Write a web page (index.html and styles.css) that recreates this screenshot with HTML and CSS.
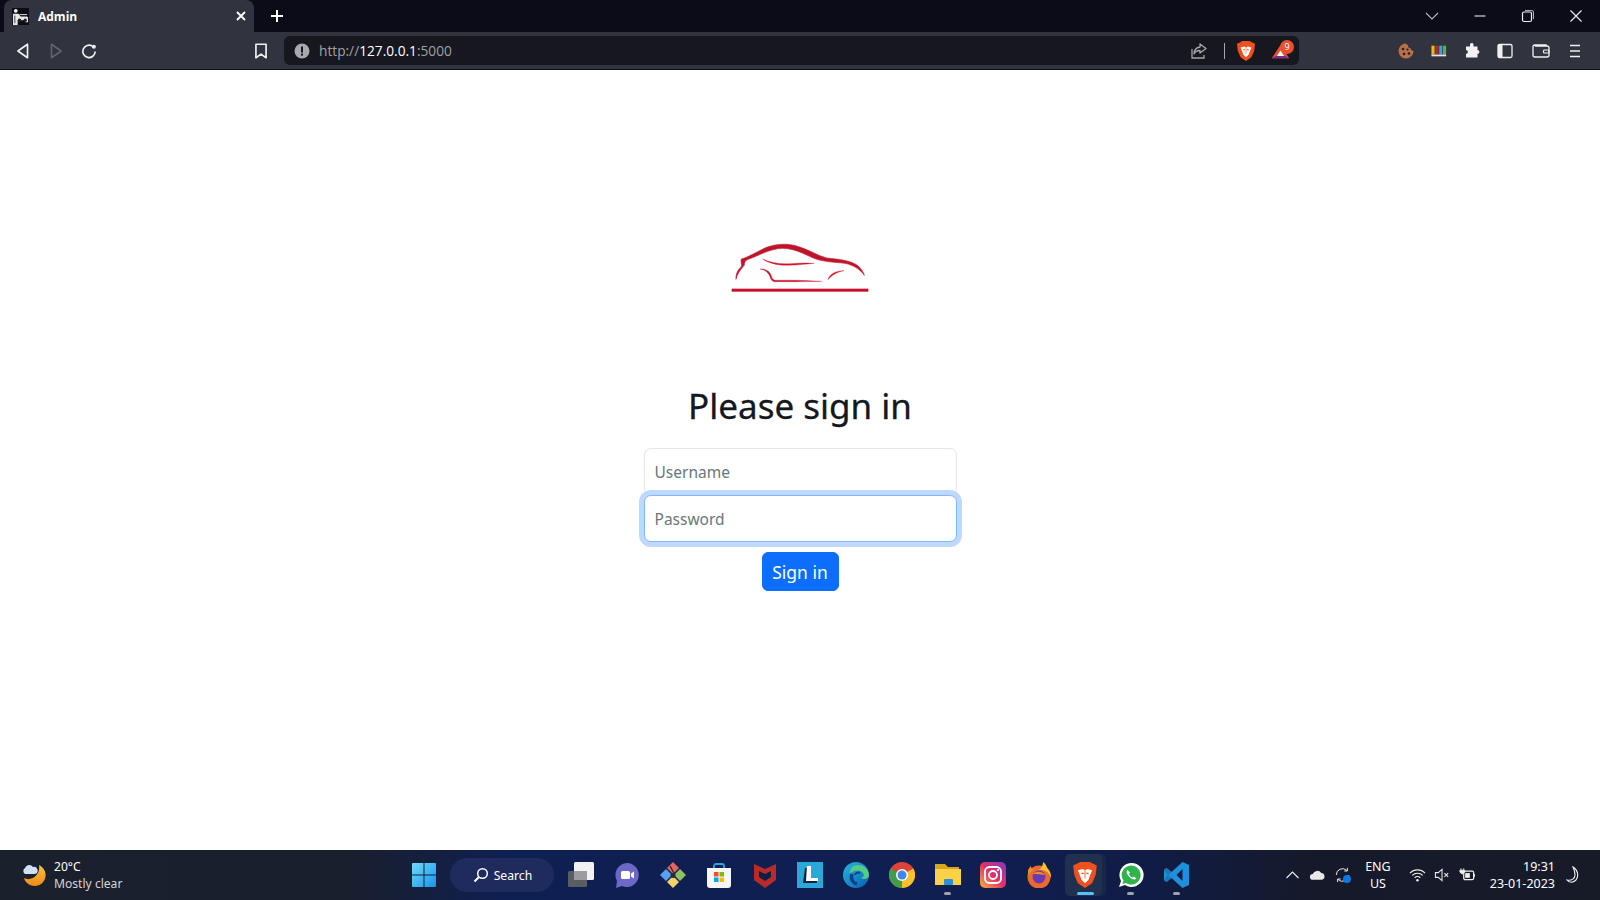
FILE: index.html
```html
<!DOCTYPE html>
<html lang="en">
<head>
<meta charset="utf-8">
<title>Admin</title>
<link rel="stylesheet" href="styles.css">
</head>
<body>
<header class="browser">
  <div class="tabstrip">
    <div class="tab">
      <svg class="favicon" viewBox="0 0 18 18"><rect width="18" height="18" fill="#0b0c12"/><circle cx="4" cy="3" r="2" fill="#eee"/><path d="M1 6h6l2 3h7l1 1v5h-3v-2H6v5H1z" fill="#e8e8e8"/><path d="M3 8v8" stroke="#0b0c12" stroke-width=".8"/><circle cx="8" cy="13" r="1.800" fill="#222"/><circle cx="14" cy="13" r="1.800" fill="#222"/><path d="M8 7h8" stroke="#e8e8e8" stroke-width="1"/></svg>
      <span class="tab-title">Admin</span>
      <svg class="tab-close" viewBox="0 0 12 12"><path d="M2 2l8 8M10 2l-8 8" stroke="#fff" stroke-width="1.800"/></svg>
    </div>
    <svg class="newtab" viewBox="0 0 14 14"><path d="M7 1v12M1 7h12" stroke="#fff" stroke-width="2"/></svg>
    <div class="win-controls">
      <svg class="win-btn" viewBox="0 0 14 14"><path d="M1 4l6 6 6-6" fill="none" stroke="#b4b6bc" stroke-width="1.100"/></svg>
      <svg class="win-btn" viewBox="0 0 14 14"><path d="M1.500 7h11" stroke="#e8e8e8" stroke-width="1.100"/></svg>
      <svg class="win-btn" viewBox="0 0 14 14"><rect x="1.500" y="3" width="9" height="9.500" rx="1.500" fill="none" stroke="#eee" stroke-width="1.200"/><path d="M4 1.500h6.500a2 2 0 0 1 2 2V10" fill="none" stroke="#aaa" stroke-width="1.100"/></svg>
      <svg class="win-btn" viewBox="0 0 14 14"><path d="M1.500 1.500l11 11M12.500 1.500l-11 11" stroke="#eee" stroke-width="1.100"/></svg>
    </div>
  </div>
  <div class="toolbar">
    <svg class="tool first" viewBox="0 0 16 16"><path d="M12 2v12L3.500 8z" fill="none" stroke="#f0f0f0" stroke-width="1.500" stroke-linejoin="round"/></svg>
    <svg class="tool" viewBox="0 0 16 16"><path d="M4 2v12L12.500 8z" fill="none" stroke="#62646d" stroke-width="1.400" stroke-linejoin="round"/></svg>
    <svg class="tool" viewBox="0 0 16 16"><path d="M13.500 8.500A5.500 5.500 0 1 1 11 3.700" fill="none" stroke="#f0f0f0" stroke-width="1.500"/><circle cx="12.300" cy="4.300" r="1.800" fill="#f0f0f0"/></svg>
    <svg class="tool bookmark" viewBox="0 0 16 16"><path d="M3.500 2h9v12L8 10.800 3.500 14z" fill="none" stroke="#f0f0f0" stroke-width="1.500" stroke-linejoin="round"/></svg>
    <div class="urlbar">
      <svg class="alert" viewBox="0 0 16 16"><circle cx="8" cy="8" r="7.500" fill="#a8a9ae"/><rect x="7" y="3.500" width="2" height="6" fill="#16171f"/><rect x="7" y="10.600" width="2" height="2" fill="#16171f"/></svg>
      <span class="url"><span class="dim">http://</span><span class="host">127.0.0.1</span><span class="dim">:5000</span></span>
      <svg class="share" viewBox="0 0 18 18"><path d="M2 7v9h12v-3" fill="none" stroke="#a5a6ab" stroke-width="1.300"/><path d="M10 2l6 4.500-6 4.500V8.500c-3 0-5 1-6 3.500 0-4 2.500-6.500 6-7z" fill="none" stroke="#a5a6ab" stroke-width="1.300" stroke-linejoin="round"/></svg>
      <span class="sep"></span>
      <svg class="brave-small" viewBox="2 1 20 22"><path d="M5 2.500L8 1h8l3 1.500 3 1.500-1 8-3 7-6 4-6-4-3-7-1-8z" fill="#f0501e"/><path d="M6 8l4-1 2 1 2-1 4 1-2 5-1 3-3 3-3-3-1-3z" fill="#fff"/><path d="M9 10h2v1.200H9zM13 10h2v1.200h-2z" fill="#f0501e"/><path d="M12 8v7" stroke="#f0501e" stroke-width=".7"/></svg>
      <span class="bat">
        <svg class="bat-icon" viewBox="0 0 24 20"><path d="M12 1l11 17H1z" fill="#e8502f"/><path d="M1 18l5-3h12l5 3z" fill="#7c2a92"/><path d="M12 8l4.500 7h-9z" fill="#fff"/></svg>
        <span class="badge">9</span>
      </span>
    </div>
    <div class="extensions">
      <svg class="ext" viewBox="0 0 16 16"><path d="M8 .500a7.500 7.500 0 1 0 7.500 7.500c-1.500 0-2.500-1-2.700-2.500C11 5.500 9.800 4 10 2 9 1.800 8.500 1.500 8 .500z" fill="#b8704a"/><circle cx="5" cy="6" r="1.300" fill="#2c1a14"/><circle cx="9.500" cy="6.500" r="1.100" fill="#2c1a14"/><circle cx="11" cy="10.500" r="1.300" fill="#2c1a14"/><circle cx="6" cy="11" r="1.300" fill="#2c1a14"/></svg>
      <svg class="ext" viewBox="0 0 18 16"><rect x="0.500" y="2" width="3.500" height="10" fill="#e8b71e"/><rect x="4.800" y="2" width="3.500" height="10" fill="#b32a1f"/><rect x="9.200" y="2" width="3.500" height="10" fill="#3f9ce0"/><rect x="13.500" y="2" width="3.500" height="10" fill="#58b347"/><path d="M0.500 12h16.500v2H0.500z" fill="#e4e4e4"/></svg>
      <svg class="ext" viewBox="0 0 16 16"><path d="M6 1.500a1.800 1.800 0 0 1 3.500 0V3.500h4v3.500a1.900 1.900 0 0 1 0 3.800v3.700H2v-3.700a1.900 1.900 0 0 0 0-3.800V3.500h4z" fill="#f2f2f2"/></svg>
      <svg class="ext" viewBox="0 0 16 16"><rect x="1" y="1.500" width="14" height="13" rx="1.500" fill="none" stroke="#f0f0f0" stroke-width="1.300"/><rect x="1" y="1.500" width="4.500" height="13" fill="#f0f0f0"/></svg>
      <svg class="ext wallet" viewBox="0 0 18 16"><path d="M14 3V2H3a2 2 0 0 0-2 2v8a2 2 0 0 0 2 2h12a2 2 0 0 0 2-2V5a2 2 0 0 0-2-2H3" fill="none" stroke="#f0f0f0" stroke-width="1.300"/><rect x="11.500" y="7" width="5.500" height="3" rx="1" fill="none" stroke="#f0f0f0" stroke-width="1.200"/></svg>
      <svg class="ext" viewBox="0 0 16 16"><path d="M3 2.500h10M3 8h10M3 13.500h10" stroke="#f0f0f0" stroke-width="1.300"/></svg>
    </div>
  </div>
</header>

<main class="page">
  <svg class="logo" viewBox="0 0 540 210" role="img" aria-label="Car logo">
    <path d="M78 148C77 130 84 120 95 108C94 100 92 94 94 87C115 82 140 65 170 52C200 41 232 40 260 48C295 58 320 76 350 84C390 88 425 92 445 108C455 118 461 128 463 136C450 118 432 106 405 100C370 96 335 96 305 82C275 68 250 56 218 55C180 56 150 75 115 88C105 92 104 96 103 105C93 118 82 130 78 148Z" fill="#bd1429" stroke="#c4203a" stroke-width="2"/>
    <path d="M158 87C180 98 210 103 240 101C265 99 290 98 312 100C285 103 262 105 238 106C205 107 175 100 158 87Z" fill="#d5142b" stroke="#d5142b"/>
    <path d="M150 117C170 116 180 125 185 140C187 147 190 150 197 151C240 150 295 151 335 154C290 155 235 156 192 155C184 153 182 146 178 136C172 124 163 119 150 117Z" fill="#c6152c" stroke="#c6152c"/>
    <path d="M354 149C357 134 375 122 402 122C382 126 366 134 354 149Z" fill="#d5142b" stroke="#d5142b"/>
    <rect x="65" y="176" width="410" height="9" fill="#c8102e"/>
  </svg>
  <h1 class="title">Please sign in</h1>
  <form class="signin">
    <input class="field field-top" type="text" placeholder="Username">
    <input class="field field-focus" type="password" placeholder="Password">
    <button class="submit" type="button">Sign in</button>
  </form>
</main>

<footer class="taskbar">
  <div class="weather">
    <svg class="weather-icon" viewBox="0 0 26 26"><defs><linearGradient id="moon" x1="0" y1="0" x2="0" y2="1"><stop offset="0" stop-color="#f9c33c"/><stop offset="1" stop-color="#ee8a18"/></linearGradient></defs><path d="M18 3a11 11 0 1 1-15 13C10 20 20 13 18 3z" fill="url(#moon)"/><path d="M4 12a3.500 3.500 0 0 1 0-6 4.500 4.500 0 0 1 8-1 3.500 3.500 0 0 1 2 7z" fill="#cfe0f5"/></svg>
    <div class="weather-text"><span class="temp">20°C</span><span class="cond">Mostly clear</span></div>
  </div>

  <div class="apps">
    <div class="app start"><svg class="icon" viewBox="0 0 26 26"><defs><linearGradient id="win" x1="0" y1="0" x2="1" y2="1"><stop offset="0" stop-color="#6fdcf8"/><stop offset="1" stop-color="#1793ea"/></linearGradient></defs><path d="M1 2a1 1 0 0 1 1-1h10.500v11.500H1zM13.500 1H24a1 1 0 0 1 1 1v10.500H13.500zM1 13.500h11.500V25H2a1 1 0 0 1-1-1zM13.500 13.500H25V24a1 1 0 0 1-1 1H13.500z" fill="url(#win)"/></svg></div>
    <div class="search">
      <svg class="search-icon" viewBox="0 0 16 16"><circle cx="9.500" cy="6.500" r="4.800" fill="none" stroke="#fff" stroke-width="1.500"/><path d="M6 10l-4.500 4.500" stroke="#fff" stroke-width="2"/></svg>
      <span>Search</span>
    </div>
    <div class="app"><svg class="icon" viewBox="0 0 26 26"><rect x="0" y="9" width="19" height="16" rx="1.500" fill="#5b5d64"/><rect x="6" y="0" width="20" height="18" rx="1.500" fill="#f2f2f2"/><rect x="6" y="9" width="13" height="9" fill="#9b9ca1"/></svg></div>
    <div class="app"><svg class="icon" viewBox="0 0 26 26"><path d="M13 1a12 12 0 1 1-5 23L2 26l1-7A12 12 0 0 1 13 1z" fill="#6c68c8"/><rect x="7" y="9" width="9" height="8" rx="1.500" fill="#fff"/><path d="M17 11.500l3-2v7l-3-2z" fill="#fff"/></svg></div>
    <div class="app"><svg class="icon" viewBox="0 0 26 26"><path d="M13 0l6 6-6 6-6-6z" fill="#e2685f"/><path d="M20 7l6 6-6 6-6-6z" fill="#8ec163"/><path d="M13 14l6 6-6 6-6-6z" fill="#f1d368"/><path d="M6 7l6 6-6 6-6-6z" fill="#5a9ff0"/><path d="M10 4l5 9" stroke="#2a2c38" stroke-width="1.400"/><circle cx="13" cy="13.500" r="2.500" fill="#2a2c38"/></svg></div>
    <div class="app"><svg class="icon" viewBox="0 0 26 26"><path d="M8 7V4a2 2 0 0 1 2-2h6a2 2 0 0 1 2 2v3" fill="none" stroke="#2aa4e0" stroke-width="1.800"/><path d="M1 6h24v17a3 3 0 0 1-3 3H4a3 3 0 0 1-3-3z" fill="#f6f6f6"/><rect x="8" y="10" width="4.500" height="4.500" fill="#f25022"/><rect x="13.500" y="10" width="4.500" height="4.500" fill="#7fba00"/><rect x="8" y="15.500" width="4.500" height="4.500" fill="#00a4ef"/><rect x="13.500" y="15.500" width="4.500" height="4.500" fill="#ffb900"/></svg></div>
    <div class="app"><svg class="icon" viewBox="0 0 26 26"><path d="M2 2l11 5 11-5v16L13 26 2 18z" fill="#b92a2a"/><path d="M7 9v6l6 4 6-4V9l-6 3z" fill="#0f1d44"/></svg></div>
    <div class="app"><svg class="icon" viewBox="0 0 26 26"><rect width="26" height="26" fill="#2aa8d8"/><path d="M8 6h5v11h7v4H6z" fill="#13233d"/><path d="M10 4h4v12h7v3H9z" fill="#fff"/></svg></div>
    <div class="app"><svg class="icon" viewBox="0 0 26 26"><defs><linearGradient id="edge" x1="0" y1="0" x2="1" y2="1"><stop offset="0" stop-color="#2bb4d8"/><stop offset="0.600" stop-color="#1583c9"/><stop offset="1" stop-color="#0c5aa8"/></linearGradient></defs><circle cx="13" cy="13" r="13" fill="url(#edge)"/><path d="M26 14C26 6 20 3 15 3 9 3 6 8 7 13c1-5 10-6 13-2 1.500 2 1 4-2 5 3 2 7 1 8-2z" fill="#55cc85"/><path d="M9 12c-2 5 1 9 5 10" fill="none" stroke="#0d3f86" stroke-width="3.500"/><path d="M12 13c0-2 3-3 5-2" fill="none" stroke="#0d3f86" stroke-width="2"/></svg></div>
    <div class="app"><svg class="icon" viewBox="0 0 26 26"><circle cx="13" cy="13" r="13" fill="#db4437"/><path d="M13 13L24.300 6.500A13 13 0 0 1 13 26z" fill="#fbc02d"/><path d="M13 13L13 26A13 13 0 0 1 1.700 6.500z" fill="#3f9d4b"/><circle cx="13" cy="13" r="6" fill="#fff"/><circle cx="13" cy="13" r="4.500" fill="#3f86f0"/></svg></div>
    <div class="app pinned"><svg class="icon" viewBox="0 0 26 26"><path d="M0 2h10l3 3h11v18H0z" fill="#d9a51f"/><path d="M0 7h26v16H0z" fill="#fbd145"/><rect x="9" y="17" width="9" height="6" rx="1" fill="#2d8fd8"/></svg><span class="dot"></span></div>
    <div class="app"><svg class="icon" viewBox="0 0 26 26"><defs><linearGradient id="ig" x1="0" y1="1" x2="1" y2="0"><stop offset="0" stop-color="#fbb03b"/><stop offset="0.500" stop-color="#e1306c"/><stop offset="1" stop-color="#7a3bc1"/></linearGradient></defs><rect width="26" height="26" rx="5" fill="url(#ig)"/><rect x="5" y="5" width="16" height="16" rx="4.500" fill="none" stroke="#fff" stroke-width="1.800"/><circle cx="13" cy="13" r="4" fill="none" stroke="#fff" stroke-width="1.800"/><circle cx="18" cy="8" r="1.100" fill="#fff"/></svg></div>
    <div class="app"><svg class="icon" viewBox="0 0 26 26"><circle cx="13" cy="15" r="11.500" fill="#f0682a"/><path d="M17 0c4 3 3 5 6 8 2 3 2 6 2 8-3-8-9-9-13-8 3-1 5-4 5-8z" fill="#fbc02d"/><path d="M2 8c1-2 2-3 3-4 0 2 1 3 3 4-3 1-5 3-6 7z" fill="#f58a2a"/><circle cx="13" cy="15" r="6.500" fill="#6a3bb0"/><path d="M7 12c3-3 9-3 12 1-4-1-8-1-12-1z" fill="#f58a2a"/></svg></div>
    <div class="app active">
      <svg class="icon" viewBox="2 1 20 22"><path d="M5 2.500L8 1h8l3 1.500 3 1.500-1 8-3 7-6 4-6-4-3-7-1-8z" fill="#f0501e"/><path d="M6 8l4-1 2 1 2-1 4 1-2 5-1 3-3 3-3-3-1-3z" fill="#fff"/><path d="M9 10h2v1.200H9zM13 10h2v1.200h-2z" fill="#f0501e"/><path d="M12 8v7" stroke="#f0501e" stroke-width=".7"/></svg>
      <span class="running"></span>
    </div>
    <div class="app pinned">
      <svg class="icon" viewBox="0 0 26 26"><path d="M13 1a12 12 0 1 1-6 22L1 25l2-6A12 12 0 0 1 13 1z" fill="#fff"/><path d="M13 3.500a9.500 9.500 0 1 1-5 17.500l-3.500 1 1-3.500A9.500 9.500 0 0 1 13 3.500z" fill="#2fb44a"/><path d="M9.500 8c-2 2 0 5 2 7s5 3.500 7 1.500l-2.500-2-1.500 1c-1.500-.5-3-2-3.500-3.500l1-1.500z" fill="#fff"/></svg>
      <span class="dot"></span>
    </div>
    <div class="app pinned">
      <svg class="icon" viewBox="0 0 26 26"><path d="M18.500 0L25 3v20l-6.500 3-11-10-5 4L0 18V8l2.500-2 5 4z" fill="#1f8fdc"/><path d="M18.500 7l-6 6 6 6z" fill="#0f1d44"/><path d="M0 8l2.500-2 5 4L4 13l3.500 3-5 4L0 18l4-5z" fill="#1877bf"/></svg>
      <span class="dot"></span>
    </div>
  </div>

  <div class="tray">
    <svg class="tray-icon" viewBox="0 0 16 16"><path d="M2 11l6-6 6 6" fill="none" stroke="#eee" stroke-width="1.100"/></svg>
    <svg class="tray-icon" viewBox="0 0 18 16"><path d="M4 13a3 3 0 0 1 0-6 5 5 0 0 1 9-1 3.600 3.600 0 0 1 1 7z" fill="#e8e8e8"/></svg>
    <span class="sync">
      <svg class="tray-icon" viewBox="0 0 18 18"><path d="M2 9a7 7 0 0 1 12-5M16 9a7 7 0 0 1-12 5" fill="none" stroke="#eee" stroke-width="1.100"/><path d="M14.500 1v3.500H11M3.500 17v-3.500H7" fill="none" stroke="#eee" stroke-width="1.100"/></svg>
      <span class="sync-dot"></span>
    </span>
    <div class="lang"><span>ENG</span><span>US</span></div>
    <svg class="tray-icon" viewBox="0 0 18 16"><path d="M1 6a11 11 0 0 1 16 0M3.500 8.500a7.500 7.500 0 0 1 11 0M6 11a4 4 0 0 1 6 0" fill="none" stroke="#eee" stroke-width="1.200"/><circle cx="9" cy="13.500" r="1.300" fill="#eee"/></svg>
    <svg class="tray-icon" viewBox="0 0 18 16"><path d="M1.500 5.500h3L8.500 2v12l-4-3.500h-3z" fill="none" stroke="#eee" stroke-width="1.100"/><path d="M11 6l4 4M15 6l-4 4" stroke="#eee" stroke-width="1.100"/></svg>
    <svg class="tray-icon" viewBox="0 0 18 16"><rect x="5" y="4" width="10.500" height="9" rx="1.500" fill="none" stroke="#eee" stroke-width="1.300"/><rect x="6.500" y="6" width="5" height="5" fill="#eee"/><path d="M16 7v3" stroke="#eee" stroke-width="1.500"/><path d="M2 1v2M5 1v2M1 3h5v2L3.500 7 1 5z" stroke="#eee" stroke-width="1" fill="#eee"/></svg>
    <div class="clock"><span>19:31</span><span>23-01-2023</span></div>
    <svg class="tray-icon moon" viewBox="0 0 16 18"><path d="M7 1c5 3 6 9 3 13-3 3-7 3-9 0 4 1 8-1 8-5 0-3-1-6-2-8z" fill="none" stroke="#eee" stroke-width="1.100"/></svg>
  </div>
</footer>
</body>
</html>
```

FILE: styles.css
```css
* { box-sizing: border-box; }
html, body { margin: 0; height: 100%; }
body {
  display: flex;
  flex-direction: column;
  width: 1600px;
  height: 900px;
  overflow: hidden;
  background: #fff;
  font-family: "Noto Sans", "Open Sans", sans-serif;
}
svg { display: block; flex: none; }

/* browser chrome */
.browser { flex: none; border-bottom: 1px solid #111; }
.tabstrip {
  display: flex;
  align-items: flex-end;
  height: 32px;
  background: #0b0c17;
  padding-left: 4px;
}
.tab {
  display: flex;
  align-items: center;
  width: 250px;
  height: 32px;
  padding: 0 7px 0 8px;
  background: #31343f;
  border-radius: 8px 8px 0 0;
}
.favicon { width: 17px; height: 17px; }
.tab-title {
  margin-left: 9px;
  flex: 1;
  color: #fff;
  font: 700 12px "Open Sans", sans-serif;
}
.tab-close { width: 12px; height: 12px; }
.newtab { width: 14px; height: 14px; margin: 0 0 9px 16px; }
.win-controls { display: flex; margin-left: auto; gap: 34px; padding-right: 17px; height: 32px; align-items: center; }
.win-btn { width: 14px; height: 14px; }

.toolbar {
  display: flex;
  align-items: center;
  height: 37px;
  background: #31343f;
}
.tool { width: 18px; height: 18px; margin-left: 15px; }
.tool.first { margin-left: 14px; }
.bookmark { margin-left: 154px; }
.urlbar {
  display: flex;
  align-items: center;
  width: 1015px;
  height: 29px;
  margin-left: 14px;
  padding: 0 4px 0 10px;
  background: #16171f;
  border-radius: 6px;
}
.alert { width: 16px; height: 16px; }
.url { margin-left: 9px; font: 13.7px "Open Sans", sans-serif; flex: 1; }
.dim { color: #a0a1a6; }
.host { color: #fff; }
.share { width: 18px; height: 18px; }
.sep { width: 1px; height: 16px; margin-left: 16px; background: #a5a6ab; }
.brave-small { width: 18px; height: 20px; margin-left: 12px; }
.bat { position: relative; display: block; width: 24px; height: 20px; margin-left: 16px; }
.bat-icon { width: 19px; height: 16px; margin-top: 3px; }
.badge {
  position: absolute;
  top: -1px;
  right: 1px;
  width: 14px;
  height: 14px;
  border-radius: 50%;
  background: #e8502f;
  color: #fff;
  font: 9px/14px "Open Sans", sans-serif;
  text-align: center;
}
.extensions { display: flex; align-items: center; gap: 17px; margin-left: 99px; }
.ext { width: 16px; height: 16px; }
.wallet { width: 18px; margin-left: 2px; }

/* page */
.page {
  flex: 1;
  display: flex;
  flex-direction: column;
  align-items: center;
  padding-top: 160px;
  min-height: 0;
}
.logo { width: 180px; height: 70px; }
.title {
  margin: 82px 0 18px;
  font-size: 35px;
  line-height: 48px;
  font-weight: 400;
  color: #15181c;
  -webkit-text-stroke: 0.3px #15181c;
}
.signin { display: flex; flex-direction: column; align-items: center; width: 313px; }
.field {
  display: block;
  width: 100%;
  padding: 0 10px;
  font: 15.5px "Noto Sans", sans-serif;
  color: #212529;
  background: #fff;
  outline: none;
  appearance: none;
}
.field::placeholder { color: #6c757d; opacity: 1; }
.field-top {
  height: 47px;
  border: 1px solid #e4e6ea;
  border-radius: 7px;
}
.field-focus {
  position: relative;
  height: 47px;
  border: 1px solid #86b7fe;
  border-radius: 7px;
  box-shadow: 0 0 0 5px #bfd9fe;
}
.submit {
  height: 39px;
  margin-top: 10px;
  padding: 0;
  width: 77px;
  background: #0d6efd;
  color: #fff;
  border: 1px solid #0d6efd;
  border-radius: 6px;
  font: 17.5px "Noto Sans", sans-serif;
  white-space: nowrap;
}

/* taskbar */
.taskbar {
  flex: none;
  display: grid;
  grid-template-columns: 1fr auto 1fr;
  align-items: center;
  height: 50px;
  background: linear-gradient(90deg, #1b202d 0, #1a1f2e 22%, #0e1f52 32%, #101f52 60%, #101c45 72%, #16192a 82%, #171b28 100%);
}
.weather { display: flex; align-items: center; padding-left: 21px; color: #fff; }
.weather-icon { width: 26px; height: 26px; }
.weather-text { display: flex; flex-direction: column; margin-left: 7px; font-size: 12.1px; line-height: 17px; }
.cond { color: #d3d5da; }

.apps { display: flex; align-items: center; height: 50px; padding-left: 1px; }
.app {
  position: relative;
  display: flex;
  align-items: center;
  justify-content: center;
  width: 45.8px;
  height: 46px;
}
.start { width: 46px; margin-right: 3px; }
.icon { position: relative; width: 26px; height: 26px; }
.search {
  display: flex;
  align-items: center;
  justify-content: center;
  gap: 5px;
  width: 104px;
  height: 34px;
  margin-right: 4px;
  border-radius: 17px;
  background: #1f2b5c;
  color: #fff;
  font-size: 12.2px;
}
.search-icon { width: 16px; height: 16px; }
.active::before {
  content: "";
  position: absolute;
  top: 2px;
  bottom: 2px;
  left: 3px;
  right: 6px;
  background: #22304f;
  border-radius: 5px;
  box-shadow: 4px 0 0 #1a2647;
}
.running {
  position: absolute;
  bottom: 3px;
  left: 15px;
  width: 17px;
  height: 3px;
  border-radius: 2px;
  background: #58c0f5;
}
.dot {
  position: absolute;
  bottom: 3px;
  left: 19px;
  width: 7px;
  height: 3px;
  border-radius: 2px;
  background: #9ea2ab;
}

.tray { display: flex; align-items: center; justify-content: flex-end; padding-right: 18px; color: #fff; font-size: 12.5px; }
.tray-icon { width: 17px; height: 16px; margin-left: 8px; }
.sync { position: relative; display: block; }
.sync-dot {
  position: absolute;
  right: 0;
  bottom: 0;
  width: 8px;
  height: 8px;
  border-radius: 50%;
  background: #0e78e8;
}
.lang { display: flex; flex-direction: column; align-items: center; margin: 0 10px 0 14px; line-height: 17px; }
.clock { display: flex; flex-direction: column; align-items: flex-end; margin-left: 14px; line-height: 17px; }
.moon { width: 16px; height: 18px; margin-left: 11px; }
```
